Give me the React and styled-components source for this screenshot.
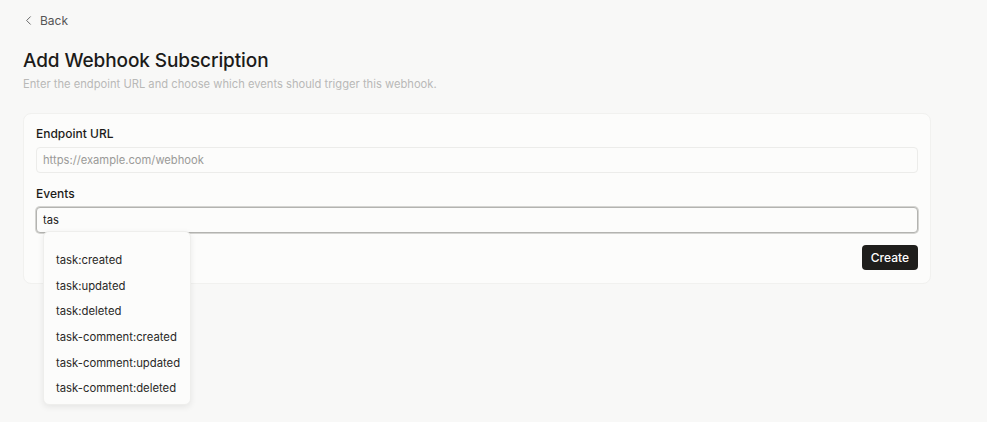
import { useState } from 'react'
import styled, { createGlobalStyle } from 'styled-components'
import { ChevronLeft } from 'lucide-react'

const GlobalStyle = createGlobalStyle`
  body {
    margin: 0;
    background: #f8f8f7;
    font-family: Inter, "Liberation Sans", sans-serif;
    color: #1c1b19;
  }
  * { box-sizing: border-box; }
`

const Page = styled.div`
  min-height: 100vh;
  padding: 11px 23px 0;
`

const BackLink = styled.a`
  display: inline-flex;
  align-items: center;
  gap: 4px;
  height: 18px;
  font-size: 12px;
  color: #555;
  cursor: pointer;
  svg {
    margin-left: -2px;
  }
`

const Title = styled.h1`
  margin: 17px 0 0;
  font-size: 19px;
  font-weight: 500;
  line-height: 24px;
  letter-spacing: -0.1px;
`

const Subtitle = styled.p`
  margin: 3px 0 0;
  font-size: 11.2px;
  line-height: 16px;
  color: #b9b9b7;
`

const Card = styled.div`
  margin-top: 21px;
  width: 908px;
  background: #fcfcfb;
  border: 1px solid #f1f1ef;
  border-radius: 8px;
  padding: 13px 12px 13px;
  display: flex;
  flex-direction: column;
`

const Field = styled.div`
  position: relative;
  display: flex;
  flex-direction: column;
  gap: 6px;
  & + & {
    margin-top: 14px;
  }
`

const Label = styled.label`
  font-size: 12px;
  font-weight: 500;
  line-height: 14px;
`

const Input = styled.input`
  height: 26px;
  padding: 0 6px;
  font-family: inherit;
  font-size: 11.2px;
  color: #1c1b19;
  background: #fcfcfb;
  border: 1px solid ${p => (p.$focused ? '#b3b3b0' : '#ececea')};
  border-radius: 4px;
  box-shadow: ${p => (p.$focused ? '0 0 0 1px #d4d4d1' : 'none')};
  outline: none;
  &::placeholder {
    color: #9a9a98;
  }
`

const Menu = styled.ul`
  position: absolute;
  left: 7px;
  top: 44px;
  width: 148px;
  margin: 0;
  padding: 16px 0 3px;
  list-style: none;
  background: #fcfcfb;
  border: 1px solid #eeeeec;
  border-radius: 6px;
  box-shadow: 0 2px 6px rgba(0, 0, 0, 0.08);
  z-index: 2;
`

const MenuItem = styled.li`
  padding: 0 0 0 12px;
  height: 25.6px;
  display: flex;
  align-items: center;
  white-space: nowrap;
  font-size: 11.3px;
  color: #2a2927;
  cursor: pointer;
`

const Actions = styled.div`
  display: flex;
  justify-content: flex-end;
  margin-top: 12px;
`

const Button = styled.button`
  height: 25px;
  padding: 0 9px;
  font-family: inherit;
  font-size: 12px;
  font-weight: 500;
  color: #fff;
  background: #1f1e1c;
  border: none;
  border-radius: 4px;
  cursor: pointer;
`

const events = [
  'task:created',
  'task:updated',
  'task:deleted',
  'task-comment:created',
  'task-comment:updated',
  'task-comment:deleted',
]

export default function App() {
  const [url, setUrl] = useState('')
  const [query, setQuery] = useState('tas')

  const matches = events.filter(e => e.includes(query))

  return (
    <Page>
      <GlobalStyle />
      <BackLink>
        <ChevronLeft size={15} strokeWidth={1.4} />
        Back
      </BackLink>
      <Title>Add Webhook Subscription</Title>
      <Subtitle>Enter the endpoint URL and choose which events should trigger this webhook.</Subtitle>

      <Card>
        <Field>
          <Label>Endpoint URL</Label>
          <Input
            placeholder="https://example.com/webhook"
            value={url}
            onChange={e => setUrl(e.target.value)}
          />
        </Field>
        <Field>
          <Label>Events</Label>
          <Input $focused value={query} onChange={e => setQuery(e.target.value)} />
          {matches.length > 0 && (
            <Menu>
              {matches.map(e => (
                <MenuItem key={e}>{e}</MenuItem>
              ))}
            </Menu>
          )}
        </Field>
        <Actions>
          <Button>Create</Button>
        </Actions>
      </Card>
    </Page>
  )
}
